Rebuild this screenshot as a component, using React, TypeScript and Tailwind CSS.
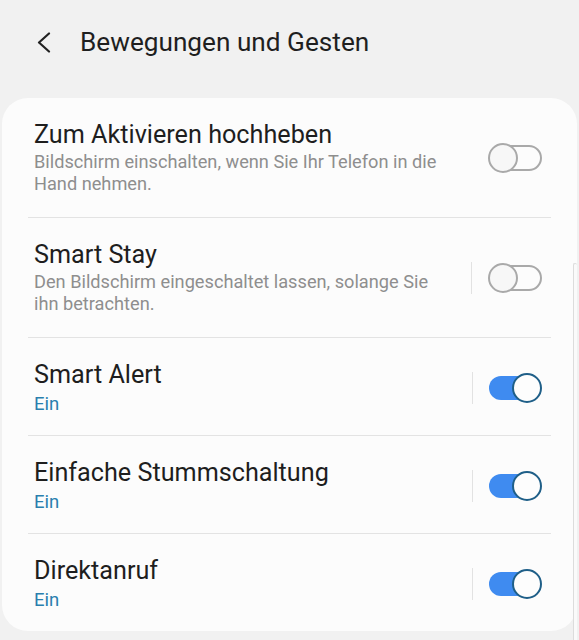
import React from 'react';

type Item = {
  title: string;
  subtitle: string;
  on: boolean;
  separator: boolean;
};

const items: Item[] = [
  {
    title: 'Zum Aktivieren hochheben',
    subtitle: 'Bildschirm einschalten, wenn Sie Ihr Telefon in die Hand nehmen.',
    on: false,
    separator: false,
  },
  {
    title: 'Smart Stay',
    subtitle: 'Den Bildschirm eingeschaltet lassen, solange Sie ihn betrachten.',
    on: false,
    separator: true,
  },
  { title: 'Smart Alert', subtitle: 'Ein', on: true, separator: true },
  { title: 'Einfache Stummschaltung', subtitle: 'Ein', on: true, separator: true },
  { title: 'Direktanruf', subtitle: 'Ein', on: true, separator: true },
];

function Toggle({ on }: { on: boolean }) {
  if (on) {
    return (
      <div className="relative h-[30px] w-[53px] shrink-0">
        <div className="absolute left-0 top-[3px] h-[24px] w-[50px] rounded-full bg-[#3f8bf0]" />
        <div className="absolute right-0 top-0 h-[30px] w-[30px] rounded-full border-2 border-[#1f5f88] bg-[#fdfdfd]" />
      </div>
    );
  }
  return (
    <div className="relative h-[30px] w-[54px] shrink-0">
      <div className="absolute right-0 top-[2px] h-[26px] w-[50px] rounded-full border-2 border-[#a9a9a9]" />
      <div className="absolute left-0 top-0 h-[30px] w-[30px] rounded-full border-2 border-[#a9a9a9] bg-[#f7f7f7]" />
    </div>
  );
}

export default function App() {
  return (
    <div
      className="relative h-[640px] w-[579px] overflow-hidden bg-[#f1f1f1]"
      style={{ fontFamily: 'Roboto, "Noto Sans", sans-serif' }}
    >
      <div className="flex h-[98px] items-start pt-[23px]">
        <div className="ml-[36px] flex h-[38px] w-[20px] items-center">
          <svg width="17" height="21" viewBox="0 0 17 21" fill="none">
            <path d="M13 1.5 3 10.5l10 9" stroke="#222" strokeWidth="2.2" strokeLinecap="round" strokeLinejoin="round" />
          </svg>
        </div>
        <h1 className="ml-[24px] text-[26.2px] leading-[38px] text-[#1f1f1f]">Bewegungen und Gesten</h1>
      </div>

      <div className="ml-[2px] w-[575px] rounded-[26px] bg-[#fcfcfc] px-[26px]">
        {items.map((item, i) => (
          <div key={item.title} className={i > 0 ? 'border-t border-[#e3e3e3]' : ''}>
            <div
              className={
                item.on
                  ? 'flex items-center pb-[20px] pl-[6px] pr-[9px] pt-[22px]'
                  : 'flex items-center py-[22px] pl-[6px] pr-[9px]'
              }
            >
              <div className="min-w-0 flex-1">
                <div className="text-[25.2px] leading-[30px] text-[#1e1e1e]">{item.title}</div>
                <div
                  className={
                    item.on
                      ? 'mt-[3px] text-[18.5px] leading-[22px] text-[#2a7fae]'
                      : 'mt-[1px] max-w-[418px] text-[18.2px] leading-[22px] text-[#8e8e8e]'
                  }
                >
                  {item.subtitle}
                </div>
              </div>
              {item.separator && <div className="mr-[16px] h-[32px] w-px shrink-0 bg-[#e2e2e2]" />}
              <Toggle on={item.on} />
            </div>
          </div>
        ))}
      </div>

      <div className="absolute right-[2px] top-[263px] h-[400px] w-[4px] rounded-t-full border-l border-t border-[#dcdcdc] bg-[#fafafa]" />
    </div>
  );
}
